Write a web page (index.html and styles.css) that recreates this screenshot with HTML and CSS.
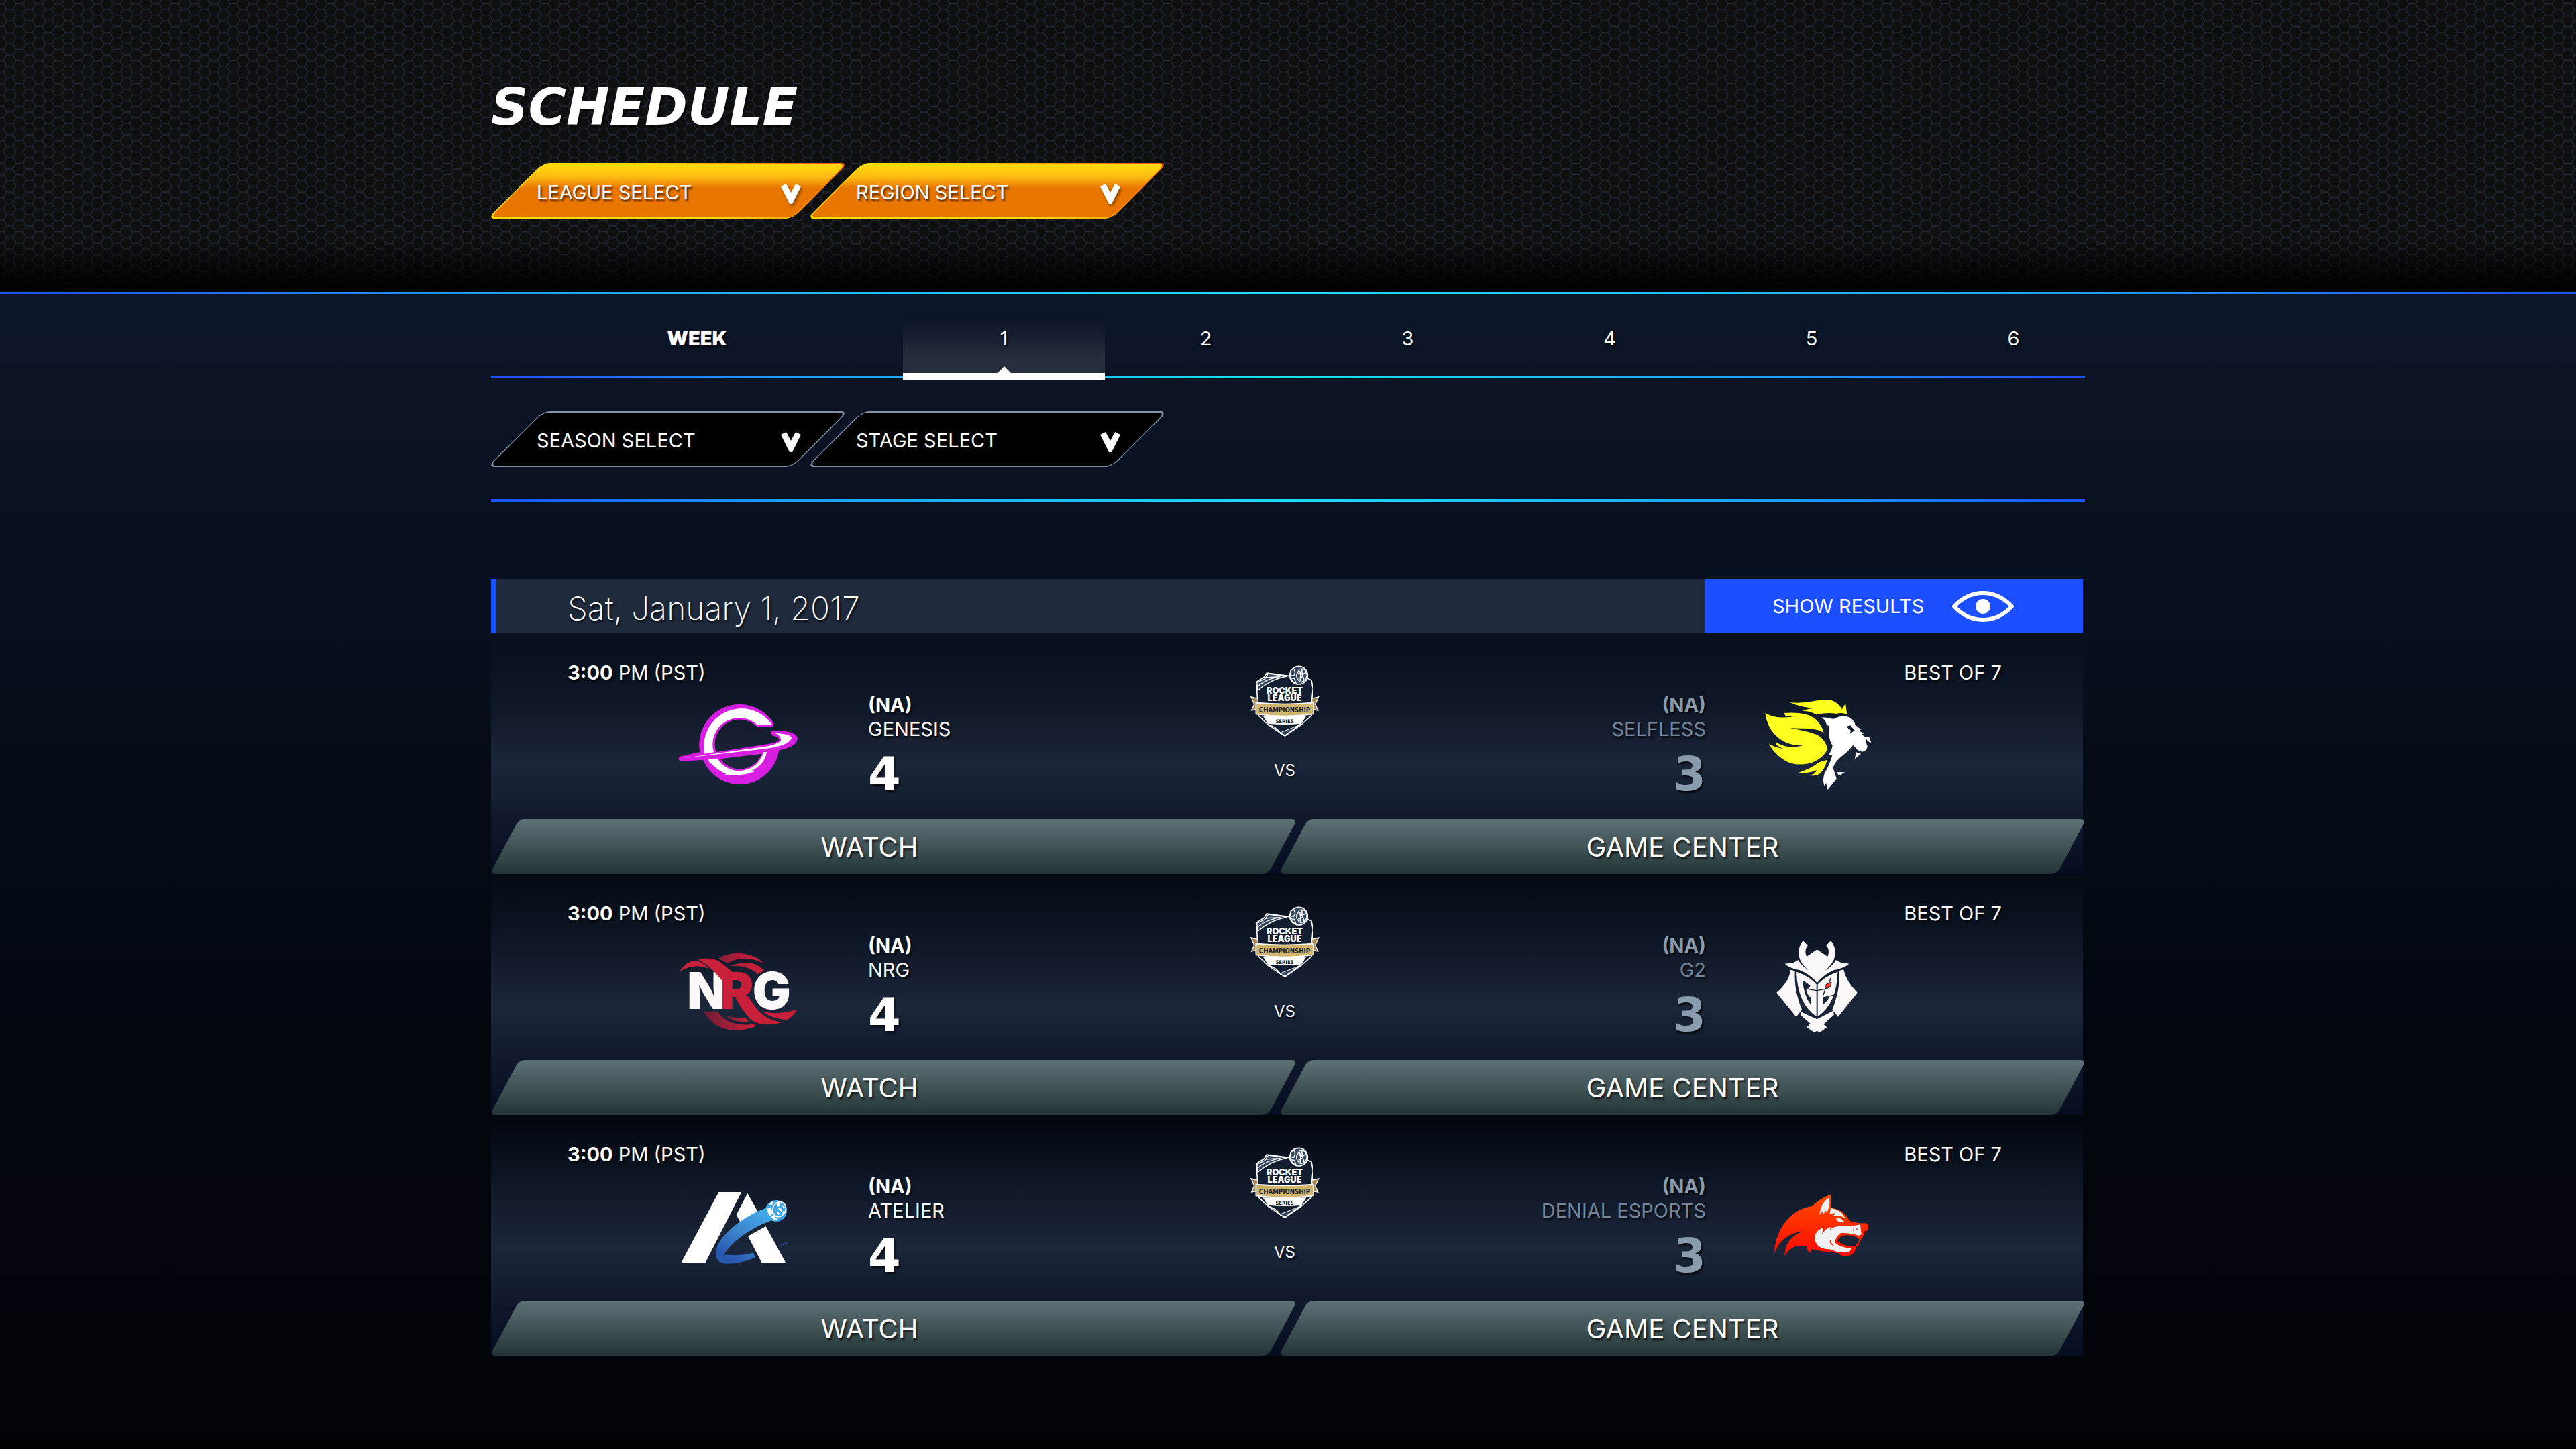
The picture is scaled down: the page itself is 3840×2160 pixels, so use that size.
FILE: index.html
```html
<!DOCTYPE html>
<html lang="en">
<head>
<meta charset="utf-8">
<meta name="viewport" content="width=device-width, initial-scale=1">
<title>Schedule</title>
<link rel="stylesheet" href="styles.css">
</head>
<body>
<svg class="defs" aria-hidden="true">
  <defs>
    <pattern id="hex" width="29" height="17" patternUnits="userSpaceOnUse" patternTransform="translate(0 -3)">
      <path d="M0 8.500H5L10 0H19L24 8.500H29M5 8.500L10 17H19L24 8.500" fill="none" stroke="#222833" stroke-width="1.400"/>
    </pattern>
    <linearGradient id="swoosh" x1="0" x2="1"><stop offset="0" stop-color="#6d1d33"/><stop offset=".8" stop-color="#c8203a"/></linearGradient>
    <linearGradient id="comet" x1="1" y1="0" x2=".4" y2="1"><stop offset="0" stop-color="#45b1ee"/><stop offset=".6" stop-color="#3d83cc"/><stop offset="1" stop-color="#2859b0"/></linearGradient>
    <linearGradient id="wolf" x1="0" y1="0" x2="0" y2="1"><stop offset="0" stop-color="#ff4c00"/><stop offset="1" stop-color="#fb0a00"/></linearGradient>
    <symbol id="chevron" viewBox="0 0 30 30"><path d="M0 4L8 0L15 13L22 0L30 4L17 30H13Z" fill="#fff"/></symbol>
    <symbol id="emblem" viewBox="66 57 318 330">
      <path d="M134 117L145 99L240 112L300 110L345 132L352 170L345 235V290L300 330L226 381L150 330L108 290L104 220L98 140Z" fill="#131f30" stroke="#fff" stroke-width="5" stroke-linejoin="round"/>
      <path d="M101 142L137 125L152 102L236 114Q160 128 105 178Z" fill="#33475f" stroke="#fff" stroke-width="4"/>
      <path d="M134 120L205 116Q140 126 104 160" fill="none" stroke="#fff" stroke-width="4"/>
      <path d="M150 330Q190 340 207 370Q250 365 300 325" fill="none" stroke="#fff" stroke-width="4"/>
      <path d="M205 366L290 333L226 378Z" fill="#33475f" stroke="#fff" stroke-width="3"/>
      <path d="M75 207L105 214V262L77 267L89 239Z" fill="#a88655" stroke="#fff" stroke-width="4"/>
      <path d="M377 207L347 214V262L374 267L362 239Z" fill="#a88655" stroke="#fff" stroke-width="4"/>
      <path d="M128 292H322L300 326Q226 334 150 326Z" fill="#fff"/>
      <path d="M97 233Q226 244 354 233V283Q226 302 97 283Z" fill="#d2b46c" stroke="#fff" stroke-width="5"/>
      <circle cx="288" cy="110" r="40" fill="#33475f" stroke="#fff" stroke-width="5"/>
      <path d="M252 88L266 80L272 96L266 112L250 110ZM252 122L268 124L276 144L262 138ZM291 83Q316 76 324 102Q328 130 298 141Q276 128 278 106Z" fill="#33475f" stroke="#fff" stroke-width="4"/>
      <path d="M286 100L304 106L324 96M304 106L302 84M304 106L312 132M286 124L304 116M292 90Q300 112 294 134" fill="none" stroke="#fff" stroke-width="5"/>
      <text class="emblem-name" x="225" y="193">ROCKET</text>
      <text class="emblem-name" x="225" y="225">LEAGUE</text>
      <text class="emblem-band" x="225" y="277">CHAMPIONSHIP</text>
      <text class="emblem-series" x="225" y="325">SERIES</text>
    </symbol>
  </defs>
</svg>

<header class="hero">
  <svg class="hero-mesh" aria-hidden="true"><rect width="100%" height="100%" fill="url(#hex)"/></svg>
  <div class="wrap">
    <h1 class="title">SCHEDULE</h1>
    <div class="filters">
      <div class="picker picker-hot"><select aria-label="League"><option>LEAGUE SELECT</option></select><svg class="chevron" aria-hidden="true"><use href="#chevron"/></svg></div>
      <div class="picker picker-hot"><select aria-label="Region"><option>REGION SELECT</option></select><svg class="chevron" aria-hidden="true"><use href="#chevron"/></svg></div>
    </div>
  </div>
</header>

<main class="wrap">
  <nav class="weeks" aria-label="Week">
    <span class="weeks-label">WEEK</span>
    <a class="week week-on" href="#week-1" aria-current="page">1</a>
    <a class="week" href="#week-2">2</a>
    <a class="week" href="#week-3">3</a>
    <a class="week" href="#week-4">4</a>
    <a class="week" href="#week-5">5</a>
    <a class="week" href="#week-6">6</a>
  </nav>
  <div class="filters filters-sub">
    <div class="picker"><select aria-label="Season"><option>SEASON SELECT</option></select><svg class="chevron" aria-hidden="true"><use href="#chevron"/></svg></div>
    <div class="picker"><select aria-label="Stage"><option>STAGE SELECT</option></select><svg class="chevron" aria-hidden="true"><use href="#chevron"/></svg></div>
  </div>

  <section class="day">
    <div class="day-bar">
      <h2 class="day-date">Sat, January 1, 2017</h2>
      <button class="results" type="button">SHOW RESULTS
        <svg class="eye" viewBox="0 0 92 46" aria-hidden="true"><path d="M3 23Q22 3 46 3T89 23Q70 43 46 43T3 23Z" fill="none" stroke="#fff" stroke-width="6" stroke-linejoin="round"/><circle cx="46" cy="23" r="11" fill="#fff"/></svg>
      </button>
    </div>

    <article class="match">
      <div class="match-body">
        <div class="side">
          <p class="meta"><b>3:00</b> PM (PST)</p>
          <div class="team">
            <svg class="logo logo-home" viewBox="0 0 720 540" role="img" aria-label="Genesis">
              <path fill="#d61fe0" fill-rule="evenodd" d="M447 192L513 190Q524 186 520 175A180 180 0 0 0 190 303L101 323Q88 333 101 344L204 339A178 178 0 0 0 544 295Q625 280 627 241Q620 206 513 207Q501 216 512 228Q540 235 545 248Q540 258 500 266L263 303A110 110 0 0 1 447 192ZM281 334L467 311A106 106 0 0 1 281 334Z"/>
              <path fill="#fff" d="M449 184L513 180A168 168 0 0 0 211 311L252 304A119 119 0 0 1 449 184ZM115 331L480 279Q552 266 553 246Q550 228 525 218Q597 222 600 241Q590 274 480 289ZM225 334L268 332Q300 385 370 388Q450 380 475 304L489 303Q480 360 418 389L435 391Q375 413 302 404L307 400L292 394Q262 378 240 354L237 357Z"/>
            </svg>
            <div class="info"><p class="region">(NA)</p><p class="name">GENESIS</p><p class="score">4</p></div>
          </div>
        </div>
        <div class="versus"><svg class="emblem" role="img" aria-label="Rocket League Championship Series"><use href="#emblem"/></svg><span class="vs">VS</span></div>
        <div class="side side-away">
          <p class="meta">BEST OF 7</p>
          <div class="team">
            <div class="info"><p class="region">(NA)</p><p class="name">SELFLESS</p><p class="score">3</p></div>
            <svg class="logo logo-away" viewBox="0 0 660 540" role="img" aria-label="Selfless">
              <path fill="#ffff1f" d="M207 81Q260 87 320 74Q380 62 408 78Q432 94 441 113Q443 97 457 90L463 135Q440 125 415 132Q380 124 325 136Q300 120 264 119Q300 105 350 107Q270 110 207 81ZM97 129Q150 160 238 142Q200 143 187 140L181 129Q275 122 318 152Q350 178 359 218Q340 202 290 198L208 196Q280 208 330 226Q368 248 376 291Q350 340 290 355Q225 367 180 338Q130 305 114 265Q130 280 175 288L148 272L145 259Q195 292 268 274Q190 275 143 228Q105 190 97 129ZM374 339Q362 385 338 403Q320 412 297 407Q325 400 327 384Q295 400 243 397Q305 375 325 358Q345 343 374 339Z"/>
              <path fill="#fff" fill-rule="evenodd" d="M345 149Q375 146 392 154Q405 158 416 149Q440 139 472 147Q492 156 500 182L525 202L518 209L541 220L527 222L540 233L562 237L571 261L556 255L548 243Q545 255 554 277Q552 300 530 302Q505 298 491 270Q480 290 440 322Q405 350 401 375L416 422L377 471L369 440L362 455Q352 430 362 400Q385 360 397 319L381 317Q396 290 398 275Q375 235 383 185L373 184L364 160ZM459 189L480 206L476 221L497 206L478 184ZM503 304L525 311L498 333ZM416 393L453 394L428 409Z"/>
            </svg>
          </div>
        </div>
      </div>
      <div class="actions"><button class="action action-watch" type="button">WATCH</button><button class="action" type="button">GAME CENTER</button></div>
    </article>

    <article class="match">
      <div class="match-body">
        <div class="side">
          <p class="meta"><b>3:00</b> PM (PST)</p>
          <div class="team">
            <svg class="logo logo-home" viewBox="0 -33 720 540" role="img" aria-label="NRG">
              <path fill="url(#swoosh)" d="M272 116Q310 93 355 93Q430 93 477 139Q390 95 314 137ZM325 151Q420 110 477 170L450 187Q405 145 325 151ZM207 353H270Q300 405 380 412Q415 413 430 410L444 418Q400 437 350 438Q250 435 207 353ZM307 372Q350 388 394 381L409 398Q340 405 307 372Z"/>
              <path fill="#c8203a" d="M100 175Q125 130 170 125Q210 135 230 162Q165 135 100 175ZM472 355Q540 370 625 344Q605 378 578 391Q510 385 472 355Z"/>
              <text class="wordmark" y="342"><tspan x="133">N</tspan><tspan class="wordmark-red" x="280">R</tspan><tspan x="425">G</tspan></text>
              <path fill="#c8203a" d="M181 122Q240 105 285 135L335 177L330 240L294 222Q235 145 181 122ZM348 292L405 284L440 335Q480 390 557 402Q480 425 425 395Q400 380 348 292Z"/>
            </svg>
            <div class="info"><p class="region">(NA)</p><p class="name">NRG</p><p class="score">4</p></div>
          </div>
        </div>
        <div class="versus"><svg class="emblem" role="img" aria-label="Rocket League Championship Series"><use href="#emblem"/></svg><span class="vs">VS</span></div>
        <div class="side side-away">
          <p class="meta">BEST OF 7</p>
          <div class="team">
            <div class="info"><p class="region">(NA)</p><p class="name">G2</p><p class="score">3</p></div>
            <svg class="logo logo-away" viewBox="0 -3 660 540" role="img" aria-label="G2">
              <path fill="#fbf8fa" d="M266 66L287 88Q270 110 282 138L329 106L376 138Q388 110 370 88L391 66Q420 105 405 150Q390 180 365 200Q400 180 413 153L437 166L472 170Q450 190 405 198Q355 220 329 255Q303 220 250 198Q205 190 185 170L222 166L245 153Q258 180 292 200Q265 180 252 150Q237 105 266 66ZM210 197L230 202Q228 270 240 310Q248 345 261 375L236 408L148 299Q205 250 210 197ZM447 195L427 202Q430 270 418 310Q410 345 397 375L423 407L509 299Q460 250 447 195ZM256 385L329 418L401 380L405 398L358 440L373 454L342 477L329 470L316 477L283 454L299 438L254 398ZM237 206Q295 225 326 262V406Q240 345 237 206ZM421 206Q365 225 332 262V406Q418 345 421 206Z"/>
              <path fill="#172235" d="M265 244L299 268L292 281H280Q284 310 300 320V352Q268 310 265 244ZM326 288H332V292H326ZM357 320L384 318L376 332L357 352Z"/>
              <path fill="none" stroke="#172235" stroke-width="4" d="M274 281L326 290L362 284M393 228L380 262L365 285L357 310M357 321L412 308"/>
              <path fill="#fb3b22" stroke="#172235" stroke-width="3" d="M364 266L393 251L390 272L372 282Z"/>
            </svg>
          </div>
        </div>
      </div>
      <div class="actions"><button class="action action-watch" type="button">WATCH</button><button class="action" type="button">GAME CENTER</button></div>
    </article>

    <article class="match">
      <div class="match-body">
        <div class="side">
          <p class="meta"><b>3:00</b> PM (PST)</p>
          <div class="team">
            <svg class="logo logo-home" viewBox="0 -36 720 540" role="img" aria-label="Atelier">
              <path fill="#fff" d="M274 81H376L215 396H107ZM403 86L453 176L375 224L353 182ZM405 278L485 234L573 396H466Z"/>
              <path fill="url(#comet)" d="M492 150L512 207Q420 240 350 300Q310 335 294 368L304 361Q370 370 429 352L437 374Q370 402 305 401Q262 398 260 350Q268 290 360 220Q430 170 492 150Z"/>
              <path fill="#2a4ea6" d="M546 322Q565 308 586 306Q570 318 546 322Z"/>
              <circle cx="531" cy="165" r="48" fill="#3fa6e6"/>
              <ellipse cx="545" cy="158" rx="29" ry="34" fill="none" stroke="#fff" stroke-width="5" transform="rotate(25 545 158)"/>
              <path fill="#fff" d="M496 140L512 124L522 126L508 142ZM493 152L508 150L516 176L502 188Q490 172 493 152ZM508 190L518 184L540 204L522 208ZM532 132L550 128L548 144L538 146ZM556 140L570 148L564 154ZM540 152L558 156L554 168L544 162ZM530 166L548 176L542 184ZM562 164L570 166L558 184Z"/>
            </svg>
            <div class="info"><p class="region">(NA)</p><p class="name">ATELIER</p><p class="score">4</p></div>
          </div>
        </div>
        <div class="versus"><svg class="emblem" role="img" aria-label="Rocket League Championship Series"><use href="#emblem"/></svg><span class="vs">VS</span></div>
        <div class="side side-away">
          <p class="meta">BEST OF 7</p>
          <div class="team">
            <div class="info"><p class="region">(NA)</p><p class="name">DENIAL ESPORTS</p><p class="score">3</p></div>
            <svg class="logo logo-away" viewBox="0 -36 660 540" role="img" aria-label="Denial Esports">
              <path fill="url(#wolf)" d="M138 358Q138 290 175 232Q225 155 308 144Q340 110 393 91V152Q450 160 472 207Q500 222 545 220Q560 222 558 240L548 262L542 250L540 270L517 306Q515 330 503 325Q500 365 460 369Q435 370 425 354Q360 350 305 336L299 353Q283 345 282 322Q215 310 184 367Q185 285 268 256Q165 270 138 358Z"/>
              <path fill="#f0f0f2" d="M340 183Q345 130 383 106Q390 140 374 170L367 164L357 180L354 166ZM390 153Q440 160 458 204Q435 178 400 190L412 175L386 178Z"/>
              <path fill="#f0f0f2" d="M413 200Q435 192 450 212Q425 222 413 200ZM318 290Q318 255 356 240L352 268Q365 245 390 236L386 252Q400 232 440 233Q490 235 522 226L527 270L515 276Q480 262 435 264Q408 285 410 308Q435 330 482 332Q480 352 450 352Q420 352 385 337Q325 335 318 290Z"/>
              <path fill="#182336" d="M420 300Q430 270 470 274Q505 278 516 292L514 306Q502 315 500 323Q450 325 420 300Z"/>
              <path fill="#fb1a00" d="M392 288Q385 310 412 326Q385 318 386 300ZM490 240L496 243L492 248ZM504 243L511 246L506 251ZM490 250L495 253L490 256Z"/>
            </svg>
          </div>
        </div>
      </div>
      <div class="actions"><button class="action action-watch" type="button">WATCH</button><button class="action" type="button">GAME CENTER</button></div>
    </article>
  </section>
</main>
</body>
</html>
```
FILE: styles.css
```css
:root {
  --beam: linear-gradient(90deg, #1c50ff, #1c9cff 18%, #1ce0f8 50%, #1c9cff 82%, #1c50ff);
}

* { box-sizing: border-box; }

body {
  margin: 0;
  min-height: 100vh;
  background: linear-gradient(#0b1628 439px, #08101e 900px, #030911 1400px, #010307 100%);
  color: #fff;
  font: 400 29px/28px Inter, "DejaVu Sans", sans-serif;
  text-shadow: 2px 3px 3px rgba(0, 0, 0, .7);
}

h1, h2, p { margin: 0; }

button, select {
  border: 0;
  background: none;
  color: inherit;
  font: inherit;
  text-shadow: inherit;
  cursor: pointer;
}

.defs { position: absolute; width: 0; height: 0; }

.wrap {
  width: 61.875%;
  margin: 0 auto;
}

/* Header */
.hero {
  position: relative;
  padding: 112px 0 110px;
  background: #0f0f0f;
  border-bottom: 3px solid;
  border-image: var(--beam) 1;
}

.hero-mesh {
  position: absolute;
  inset: 0;
  width: 100%;
  height: 100%;
}

.hero::after {
  content: "";
  position: absolute;
  inset: auto 0 0;
  height: 80px;
  background: linear-gradient(transparent, #000 95%);
}

.hero .wrap { position: relative; }

.title {
  font: italic 700 77px/96px "DejaVu Sans", sans-serif;
}

/* Slanted drop-downs */
.filters { display: flex; margin-top: 35px; }

.picker {
  position: relative;
  width: 527px;
  height: 83px;
}

.picker + .picker { margin-left: -51px; }

.picker::before {
  content: "";
  position: absolute;
  inset: 0 36px;
  transform: skewX(-45deg);
  border: 2px solid #8291a3;
  border-radius: 10px;
  background: #000;
}

.picker-hot::before {
  border-color: transparent;
  background:
    linear-gradient(#ffd60f 5%, #fdb713 25%, #e97600 45%) padding-box,
    linear-gradient(20deg, #f5e000 50%, #ff5a00 95%) border-box;
}

.picker select {
  position: relative;
  width: 100%;
  height: 100%;
  padding: 4px 100px 0 68px;
  appearance: none;
}

.picker option { color: #000; }

.chevron {
  position: absolute;
  top: 31px;
  right: 65px;
  width: 30px;
  height: 30px;
  pointer-events: none;
  filter: drop-shadow(2px 3px 2px rgba(0, 0, 0, .4));
}

/* Week tabs */
.weeks {
  position: relative;
  display: flex;
  height: 92px;
  margin: 36px 0 0;
}

.weeks::before {
  content: "";
  position: absolute;
  inset: auto 0 3px;
  height: 4px;
  background: var(--beam);
}

.weeks-label {
  flex: 0 0 614px;
  padding-top: 16px;
  text-align: center;
  font-weight: 900;
}

.week {
  position: relative;
  flex: 0 0 301px;
  padding-top: 16px;
  color: inherit;
  text-align: center;
  text-decoration: none;
}

.week-on {
  border-bottom: 11px solid #fff;
  background: linear-gradient(transparent, #262e3e 75%);
}

.week-on::after {
  content: "";
  position: absolute;
  left: 50%;
  bottom: 0;
  margin-left: -10px;
  border: 10px solid transparent;
  border-top: 0;
  border-bottom-color: #fff;
}

.filters-sub {
  margin-top: 46px;
  padding-bottom: 48px;
  border-bottom: 4px solid;
  border-image: var(--beam) 1;
}

/* Match day */
.day { margin: 115px 0 139px; }

.day-bar {
  display: flex;
  justify-content: space-between;
  margin-right: 3px;
  height: 81px;
  border-left: 8px solid #1c50ff;
  background: #1f2a3c;
}

.day-date {
  padding: 7px 0 0 106px;
  font-weight: 200;
  font-size: 48px;
  line-height: 74px;
}

.results {
  display: flex;
  align-items: center;
  gap: 42px;
  width: 563px;
  padding: 0 0 0 100px;
  background: #1c4fff;
  text-shadow: none;
}

.eye { width: 92px; height: 46px; }

.match {
  background: linear-gradient(rgba(27, 38, 58, 0), #0e1726 28%, #1b263a 55%, #10192c 77%, #060d20) 0 0 / calc(100% - 3px) 100% no-repeat;
}

.match-body {
  display: grid;
  grid-template-columns: 1fr auto 1fr;
  padding: 45px 124px 21px 114px;
}

.team {
  display: flex;
  margin-top: 3px;
  padding-left: 134px;
}

.logo { height: 180px; }
.logo-home { width: 240px; margin-right: 74px; }
.logo-away { width: 220px; margin-left: 56px; }

.info {
  padding-top: 13px;
  line-height: 36px;
}

.region { font-weight: 700; }

.score {
  margin-top: 13px;
  font: 700 70px/72px "DejaVu Sans", sans-serif;
}

.side-away { text-align: right; }

.side-away .team {
  justify-content: flex-end;
  padding: 0 165px 0 0;
}

.side-away .info { color: #8b9bae; }
.side-away .name { color: #76869a; }

.versus {
  display: flex;
  flex-direction: column;
  align-items: center;
  font-size: 24px;
}

.emblem { width: 106px; height: 110px; margin-bottom: 36px; text-shadow: none; }
.emblem-name { font: 900 38px Inter, sans-serif; fill: #fff; text-anchor: middle; }
.emblem-band { font: 700 29px "DejaVu Sans Condensed", sans-serif; fill: #131f30; text-anchor: middle; }
.emblem-series { font: 700 23px "DejaVu Sans Condensed", sans-serif; fill: #131f30; text-anchor: middle; }

.wordmark { font: 900 227px Inter, sans-serif; fill: #fbf8fa; text-shadow: none; }
.wordmark-red { fill: #c8203a; }

/* Slanted action buttons */
.actions { display: flex; }

.action {
  position: relative;
  z-index: 0;
  flex: 1 1 50%;
  height: 82px;
  padding: 2px 0 0;
  font-size: 40px;
}

.action-watch { padding-right: 72px; }
.action + .action { margin-left: -24px; }

.action::before {
  content: "";
  position: absolute;
  z-index: -1;
  inset: 0 20px;
  transform: skewX(-28deg);
  border-radius: 8px;
  background: linear-gradient(#5e7175, #243436);
}
```
